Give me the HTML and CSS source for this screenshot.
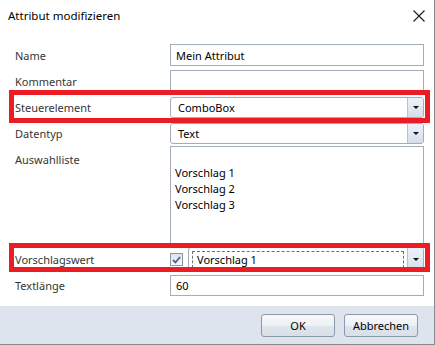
FILE: index.html
```html
<!DOCTYPE html>
<html lang="de">
<head>
  <meta charset="UTF-8">
  <title>Attribut modifizieren</title>
  <link rel="stylesheet" href="styles.css">
</head>
<body>

<div class="dialog">
  <div class="titlebar">
    <span class="title">Attribut modifizieren</span>
    <svg class="close" width="12" height="12" viewBox="0 0 12 12">
      <path d="M0.5 0.5 L11.5 11.5 M11.5 0.5 L0.5 11.5" stroke="#1a1a1a" stroke-width="1.1" fill="none"/>
    </svg>
  </div>

  <div class="form">
    <div class="row row-name">
      <label>Name</label>
      <div class="textbox">Mein Attribut</div>
    </div>
    <div class="row row-comment">
      <label>Kommentar</label>
      <div class="textbox"></div>
    </div>
    <div class="row row-control highlight">
      <label>Steuerelement</label>
      <div class="combo">
        <span class="combo-text">ComboBox</span>
        <span class="combo-btn"><i class="arrow"></i></span>
      </div>
    </div>
    <div class="row row-type">
      <label>Datentyp</label>
      <div class="combo">
        <span class="combo-text">Text</span>
        <span class="combo-btn"><i class="arrow"></i></span>
      </div>
    </div>
    <div class="row row-list">
      <label class="label-top">Auswahlliste</label>
      <div class="textbox list">
        <div class="list-line">&nbsp;</div>
        <div class="list-line">Vorschlag 1</div>
        <div class="list-line">Vorschlag 2</div>
        <div class="list-line">Vorschlag 3</div>
      </div>
    </div>
    <div class="row row-default highlight highlight-low">
      <label>Vorschlagswert</label>
      <div class="default-field">
        <span class="checkbox">
          <svg width="9" height="8" viewBox="0 0 9 8">
            <path d="M1 4 L3.5 6.5 L8 1" stroke="#45659a" stroke-width="1.8" fill="none"/>
          </svg>
        </span>
        <div class="combo combo-focus">
          <span class="combo-text"><span class="focus-rect">Vorschlag 1</span></span>
          <span class="combo-btn"><i class="arrow"></i></span>
        </div>
      </div>
    </div>
    <div class="row row-length">
      <label>Textlänge</label>
      <div class="textbox">60</div>
    </div>
  </div>

  <div class="footer">
    <button class="btn">OK</button>
    <button class="btn">Abbrechen</button>
  </div>
</div>

</body>
</html>
```

FILE: styles.css
```css
body {
  margin: 0;
  background: #ffffff;
  font-family: "Noto Sans", "Open Sans", sans-serif;
  font-size: 11px;
  color: #000;
}
.dialog {
  width: 435px;
  height: 345px;
  box-sizing: border-box;
  border-right: 1px solid #8a8a8a;
  border-bottom: 1px solid #8a8a8a;
  display: flex;
  flex-direction: column;
  background: #fff;
}
.titlebar {
  height: 30px;
  display: flex;
  align-items: center;
  justify-content: space-between;
  padding: 0 9px 0 8px;
}
.title {
  font-size: 11.5px;
  color: #000;
}
.close {
  display: block;
  margin-top: 1px;
}
.form {
  flex: 1;
  padding: 14px 10px 0 15px;
}
.row {
  position: relative;
  display: grid;
  grid-template-columns: 155px 254px;
  align-items: center;
}
.row label {
  color: #363636;
}
.row-name { height: 22px; margin-bottom: 4px; }
.row-comment { height: 22px; margin-bottom: 5px; }
.row-control { height: 21px; margin-bottom: 5px; }
.row-type { height: 21px; margin-bottom: 2px; }
.row-list { height: 99px; margin-bottom: 2px; align-items: start; }
.row-default { height: 23px; margin-bottom: 5px; }
.row-length { height: 21px; }

.label-top {
  padding-top: 6px;
}
.textbox {
  box-sizing: border-box;
  height: 100%;
  border: 1px solid #a3acb9;
  padding: 0 5px;
  display: flex;
  align-items: center;
  background: #fff;
}
.list {
  display: block;
  padding: 2px 4px;
}
.list-line {
  height: 16px;
  line-height: 16px;
}
.combo {
  box-sizing: border-box;
  height: 100%;
  border: 1px solid #a3acb9;
  border-radius: 3px;
  display: flex;
  background: #fff;
}
.combo-text {
  flex: 1;
  display: flex;
  align-items: center;
  padding-left: 7px;
}
.combo-btn {
  width: 15px;
  border-left: 1px solid #b6c2d1;
  border-radius: 0 2px 2px 0;
  background: linear-gradient(#eef3f9, #d4deea);
  display: flex;
  align-items: center;
  justify-content: center;
}
.arrow {
  width: 0;
  height: 0;
  border-left: 3px solid transparent;
  border-right: 3px solid transparent;
  border-top: 3px solid #111;
}
.default-field {
  height: 100%;
  display: grid;
  grid-template-columns: 18px 1fr;
  align-items: center;
}
.checkbox {
  box-sizing: border-box;
  width: 13px;
  height: 13px;
  border: 1px solid #8f959d;
  background: linear-gradient(#dfe3e8, #f7f8f9);
  display: flex;
  align-items: center;
  justify-content: center;
}
.combo-focus .combo-text {
  padding: 3px;
}
.focus-rect {
  box-sizing: border-box;
  width: 100%;
  height: 100%;
  border: 1px dashed #6f6f6f;
  padding-left: 4px;
  display: flex;
  align-items: center;
}
.highlight::after {
  content: "";
  position: absolute;
  left: -6px;
  right: -6px;
  top: -7px;
  bottom: -5px;
  border: 5px solid #ec1c24;
  pointer-events: none;
}
.highlight-low::after {
  top: -4px;
  bottom: -2px;
}
.footer {
  height: 38px;
  background: #dde4ee;
  display: flex;
  align-items: center;
  justify-content: flex-end;
  gap: 9px;
  padding-right: 16px;
}
.btn {
  width: 74px;
  height: 23px;
  font-family: "Noto Sans", "Open Sans", sans-serif;
  font-size: 11px;
  color: #000;
  border: 1px solid #8c99aa;
  border-radius: 3px;
  background: linear-gradient(#f6f8fa 0%, #eef1f5 50%, #dfe5ec 51%, #d9e0e8 100%);
  padding: 0;
}
```
